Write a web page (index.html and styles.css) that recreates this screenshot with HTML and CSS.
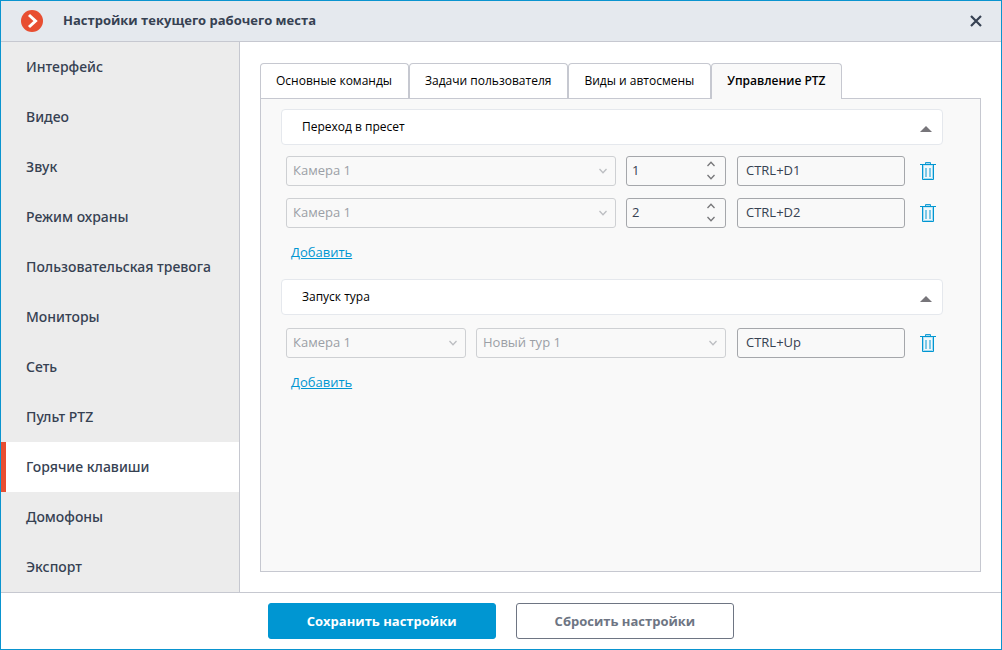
FILE: index.html
```html
<!DOCTYPE html>
<html lang="ru">
<head>
<meta charset="utf-8">
<meta name="viewport" content="width=device-width, initial-scale=1">
<title>Настройки текущего рабочего места</title>
<link rel="stylesheet" href="styles.css">
</head>
<body>
<svg class="sprite" aria-hidden="true">
  <symbol id="chevron" viewBox="0 0 8 6"><path d="M0.5 1L4 4.800L7.500 1" fill="none" stroke="currentColor" stroke-width="1.300"/></symbol>
  <symbol id="trash" viewBox="0 0 16 20">
    <path d="M3.500 4h9v13.500h-9z" fill="#f0f8fb" stroke="#a5daf0" stroke-width="1"/>
    <path d="M5.500 3V1.500h5V3" fill="none" stroke="#1a9fd6" stroke-width="1"/>
    <path d="M6 2.500h4" stroke="#a5daf0" stroke-width="1"/>
    <path d="M0 3.500h16" stroke="#0096d2" stroke-width="1"/>
    <path d="M2.500 4v14.500h11V4" fill="none" stroke="#0096d2" stroke-width="1"/>
    <path d="M6 7v9M10 7v9" stroke="#7cc8e6" stroke-width="2"/>
  </symbol>
</svg>
<div class="window">
  <header class="titlebar">
    <svg class="logo" viewBox="0 0 22 22" aria-hidden="true"><circle cx="11" cy="11" r="11" fill="#e84e31"/><path d="M8 5L14.500 11L8 17" fill="none" stroke="#fff" stroke-width="3"/></svg>
    <h1 class="title">Настройки текущего рабочего места</h1>
    <button class="close" type="button" aria-label="Закрыть"><svg viewBox="0 0 12 12"><path d="M1 1L11 11M11 1L1 11" stroke="#364152" stroke-width="2.200"/></svg></button>
  </header>
  <div class="body">
    <nav class="sidebar">
      <a class="nav-item" href="#">Интерфейс</a>
      <a class="nav-item" href="#">Видео</a>
      <a class="nav-item" href="#">Звук</a>
      <a class="nav-item" href="#">Режим охраны</a>
      <a class="nav-item" href="#">Пользовательская тревога</a>
      <a class="nav-item" href="#">Мониторы</a>
      <a class="nav-item" href="#">Сеть</a>
      <a class="nav-item" href="#">Пульт PTZ</a>
      <a class="nav-item nav-item-active" href="#" aria-current="page">Горячие клавиши</a>
      <a class="nav-item" href="#">Домофоны</a>
      <a class="nav-item" href="#">Экспорт</a>
    </nav>
    <main class="content">
      <div class="tabs" role="tablist">
        <button class="tab" type="button" role="tab">Основные команды</button>
        <button class="tab" type="button" role="tab">Задачи пользователя</button>
        <button class="tab" type="button" role="tab">Виды и автосмены</button>
        <button class="tab tab-active" type="button" role="tab" aria-selected="true">Управление PTZ</button>
      </div>
      <div class="panel" role="tabpanel">
        <section class="group">
          <button class="group-header" type="button" aria-expanded="true">Переход в пресет<span class="triangle"></span></button>
          <div class="rows">
            <div class="row">
              <div class="fields">
                <div class="select wide"><select disabled aria-label="Камера"><option>Камера 1</option></select><svg class="arrow"><use href="#chevron"/></svg></div>
                <div class="spin"><input type="number" value="1" aria-label="Пресет"><div class="steps"><button type="button" aria-label="Больше"><svg class="up"><use href="#chevron"/></svg></button><button type="button" aria-label="Меньше"><svg><use href="#chevron"/></svg></button></div></div>
              </div>
              <input class="key" type="text" value="CTRL+D1" aria-label="Горячая клавиша">
              <button class="remove" type="button" aria-label="Удалить"><svg><use href="#trash"/></svg></button>
            </div>
            <div class="row">
              <div class="fields">
                <div class="select wide"><select disabled aria-label="Камера"><option>Камера 1</option></select><svg class="arrow"><use href="#chevron"/></svg></div>
                <div class="spin"><input type="number" value="2" aria-label="Пресет"><div class="steps"><button type="button" aria-label="Больше"><svg class="up"><use href="#chevron"/></svg></button><button type="button" aria-label="Меньше"><svg><use href="#chevron"/></svg></button></div></div>
              </div>
              <input class="key" type="text" value="CTRL+D2" aria-label="Горячая клавиша">
              <button class="remove" type="button" aria-label="Удалить"><svg><use href="#trash"/></svg></button>
            </div>
          </div>
          <a class="add" href="#">Добавить</a>
        </section>
        <section class="group">
          <button class="group-header" type="button" aria-expanded="true">Запуск тура<span class="triangle"></span></button>
          <div class="rows rows-tour">
            <div class="row">
              <div class="fields">
                <div class="select camera"><select disabled aria-label="Камера"><option>Камера 1</option></select><svg class="arrow"><use href="#chevron"/></svg></div>
                <div class="select wide"><select disabled aria-label="Тур"><option>Новый тур 1</option></select><svg class="arrow"><use href="#chevron"/></svg></div>
              </div>
              <input class="key" type="text" value="CTRL+Up" aria-label="Горячая клавиша">
              <button class="remove" type="button" aria-label="Удалить"><svg><use href="#trash"/></svg></button>
            </div>
          </div>
          <a class="add" href="#">Добавить</a>
        </section>
      </div>
    </main>
  </div>
  <footer class="footer">
    <button class="button button-primary" type="button">Сохранить настройки</button>
    <button class="button" type="button">Сбросить настройки</button>
  </footer>
</div>
</body>
</html>
```

FILE: styles.css
```css
* { box-sizing: border-box; }
body { margin: 0; font-family: "Open Sans", "Noto Sans", sans-serif; font-size: 13px; color: #364152; }
button, input, select { font: inherit; color: inherit; margin: 0; }
button { cursor: pointer; }
svg { display: block; }
.sprite { display: none; }

.window { min-height: 100vh; display: flex; flex-direction: column; border: 1px solid #0a94cf; background: #fff; }

.titlebar { display: flex; align-items: center; height: 41px; padding: 0 19px 0 20px; background: #e5e9ee; border-bottom: 1px solid #c6c8d0; }
.logo { width: 22px; height: 22px; }
.title { flex: 1; margin: 0 0 0 20px; padding-bottom: 2px; font-size: 13px; font-weight: 700; line-height: 20px; }
.close { padding: 0; border: 0; background: none; }
.close svg { width: 12px; height: 12px; }

.body { flex: 1; display: flex; }
.sidebar { width: 239px; flex: none; background: #ececec; border-right: 1px solid #c6c8d0; }
.nav-item { display: flex; align-items: center; height: 50px; padding: 0 0 2px 20px; border-left: 5px solid transparent; color: #364152; font-family: "Noto Sans", sans-serif; font-size: 14px; font-weight: 500; text-decoration: none; }
.nav-item-active { background: #fff; border-left-color: #e84e31; }

.content { flex: 1; display: flex; flex-direction: column; padding: 21px 20px 20px; }
.tabs { display: flex; position: relative; }
.tab { height: 35px; padding: 0 16px 2px 15px; border: 1px solid #c6c8d0; border-bottom: 0; border-radius: 4px 4px 0 0; background: #fff; color: #000; font-size: 12px; white-space: nowrap; }
.tab-active { height: 36px; margin-bottom: -1px; padding-bottom: 3px; background: #f9f9f9; font-weight: 600; }
.panel { flex: 1; padding: 10px 37px 10px 20px; border: 1px solid #c6c8d0; background: #f9f9f9; }

.group-header { display: flex; align-items: center; justify-content: space-between; width: 100%; height: 36px; padding: 0 10px 2px 20px; border: 1px solid #e5e8ed; border-radius: 4px; background: #fff; color: #000; font-size: 12px; text-align: left; }
.triangle { border: 6px solid transparent; border-top: 0; border-bottom-color: #77757a; margin-top: 6px; }
.rows { display: grid; gap: 12px; padding: 11px 3px 0 5px; }
.rows-tour { padding-top: 13px; }
.row { display: flex; align-items: center; gap: 11px; }
.fields { flex: 1; display: flex; gap: 10px; }
.select, .spin { display: grid; align-items: center; }
.wide { flex: 1; }
.camera { width: 180px; }
.select select, .select .arrow, .spin input, .steps { grid-area: 1 / 1; }
.select select, .spin input, .key { height: 30px; border: 1px solid #a5a7ab; border-radius: 3px; background: #f9f9f9; }
.select select { width: 100%; padding: 0 24px 2px 6px; appearance: none; border-color: #ced0d3; color: #9b9fa6; opacity: 1; }
.arrow { justify-self: end; width: 8px; height: 6px; margin-right: 9px; color: #bcbec2; pointer-events: none; }
.spin { width: 100px; }
.spin input { width: 100%; padding: 0 28px 2px 5px; appearance: textfield; }
.spin input::-webkit-inner-spin-button { appearance: none; }
.steps { justify-self: end; display: grid; width: 30px; }
.steps button { display: flex; justify-content: center; align-items: center; height: 13px; padding: 0 0 1px; border: 0; background: none; color: #77777a; }
.steps svg { width: 8px; height: 6px; }
.up { transform: rotate(180deg); }
.key { width: 168px; padding: 0 8px 2px; }
.remove { display: flex; justify-content: center; width: 24px; padding: 0 0 1px; border: 0; background: none; }
.remove svg { width: 16px; height: 20px; }
.add { display: block; width: max-content; margin: 14px 0 17px 10px; color: #0096d2; line-height: 20px; text-decoration: underline; }

.footer { display: flex; justify-content: center; gap: 20px; padding: 10px; border-top: 1px solid #c6c8d0; }
.button { height: 36px; padding: 0 38px; border: 1px solid #6e7583; border-radius: 3px; background: #fff; color: #6e7583; font-weight: 700; }
.button-primary { border-color: #0096d2; background: #0096d2; color: #fff; }
```
